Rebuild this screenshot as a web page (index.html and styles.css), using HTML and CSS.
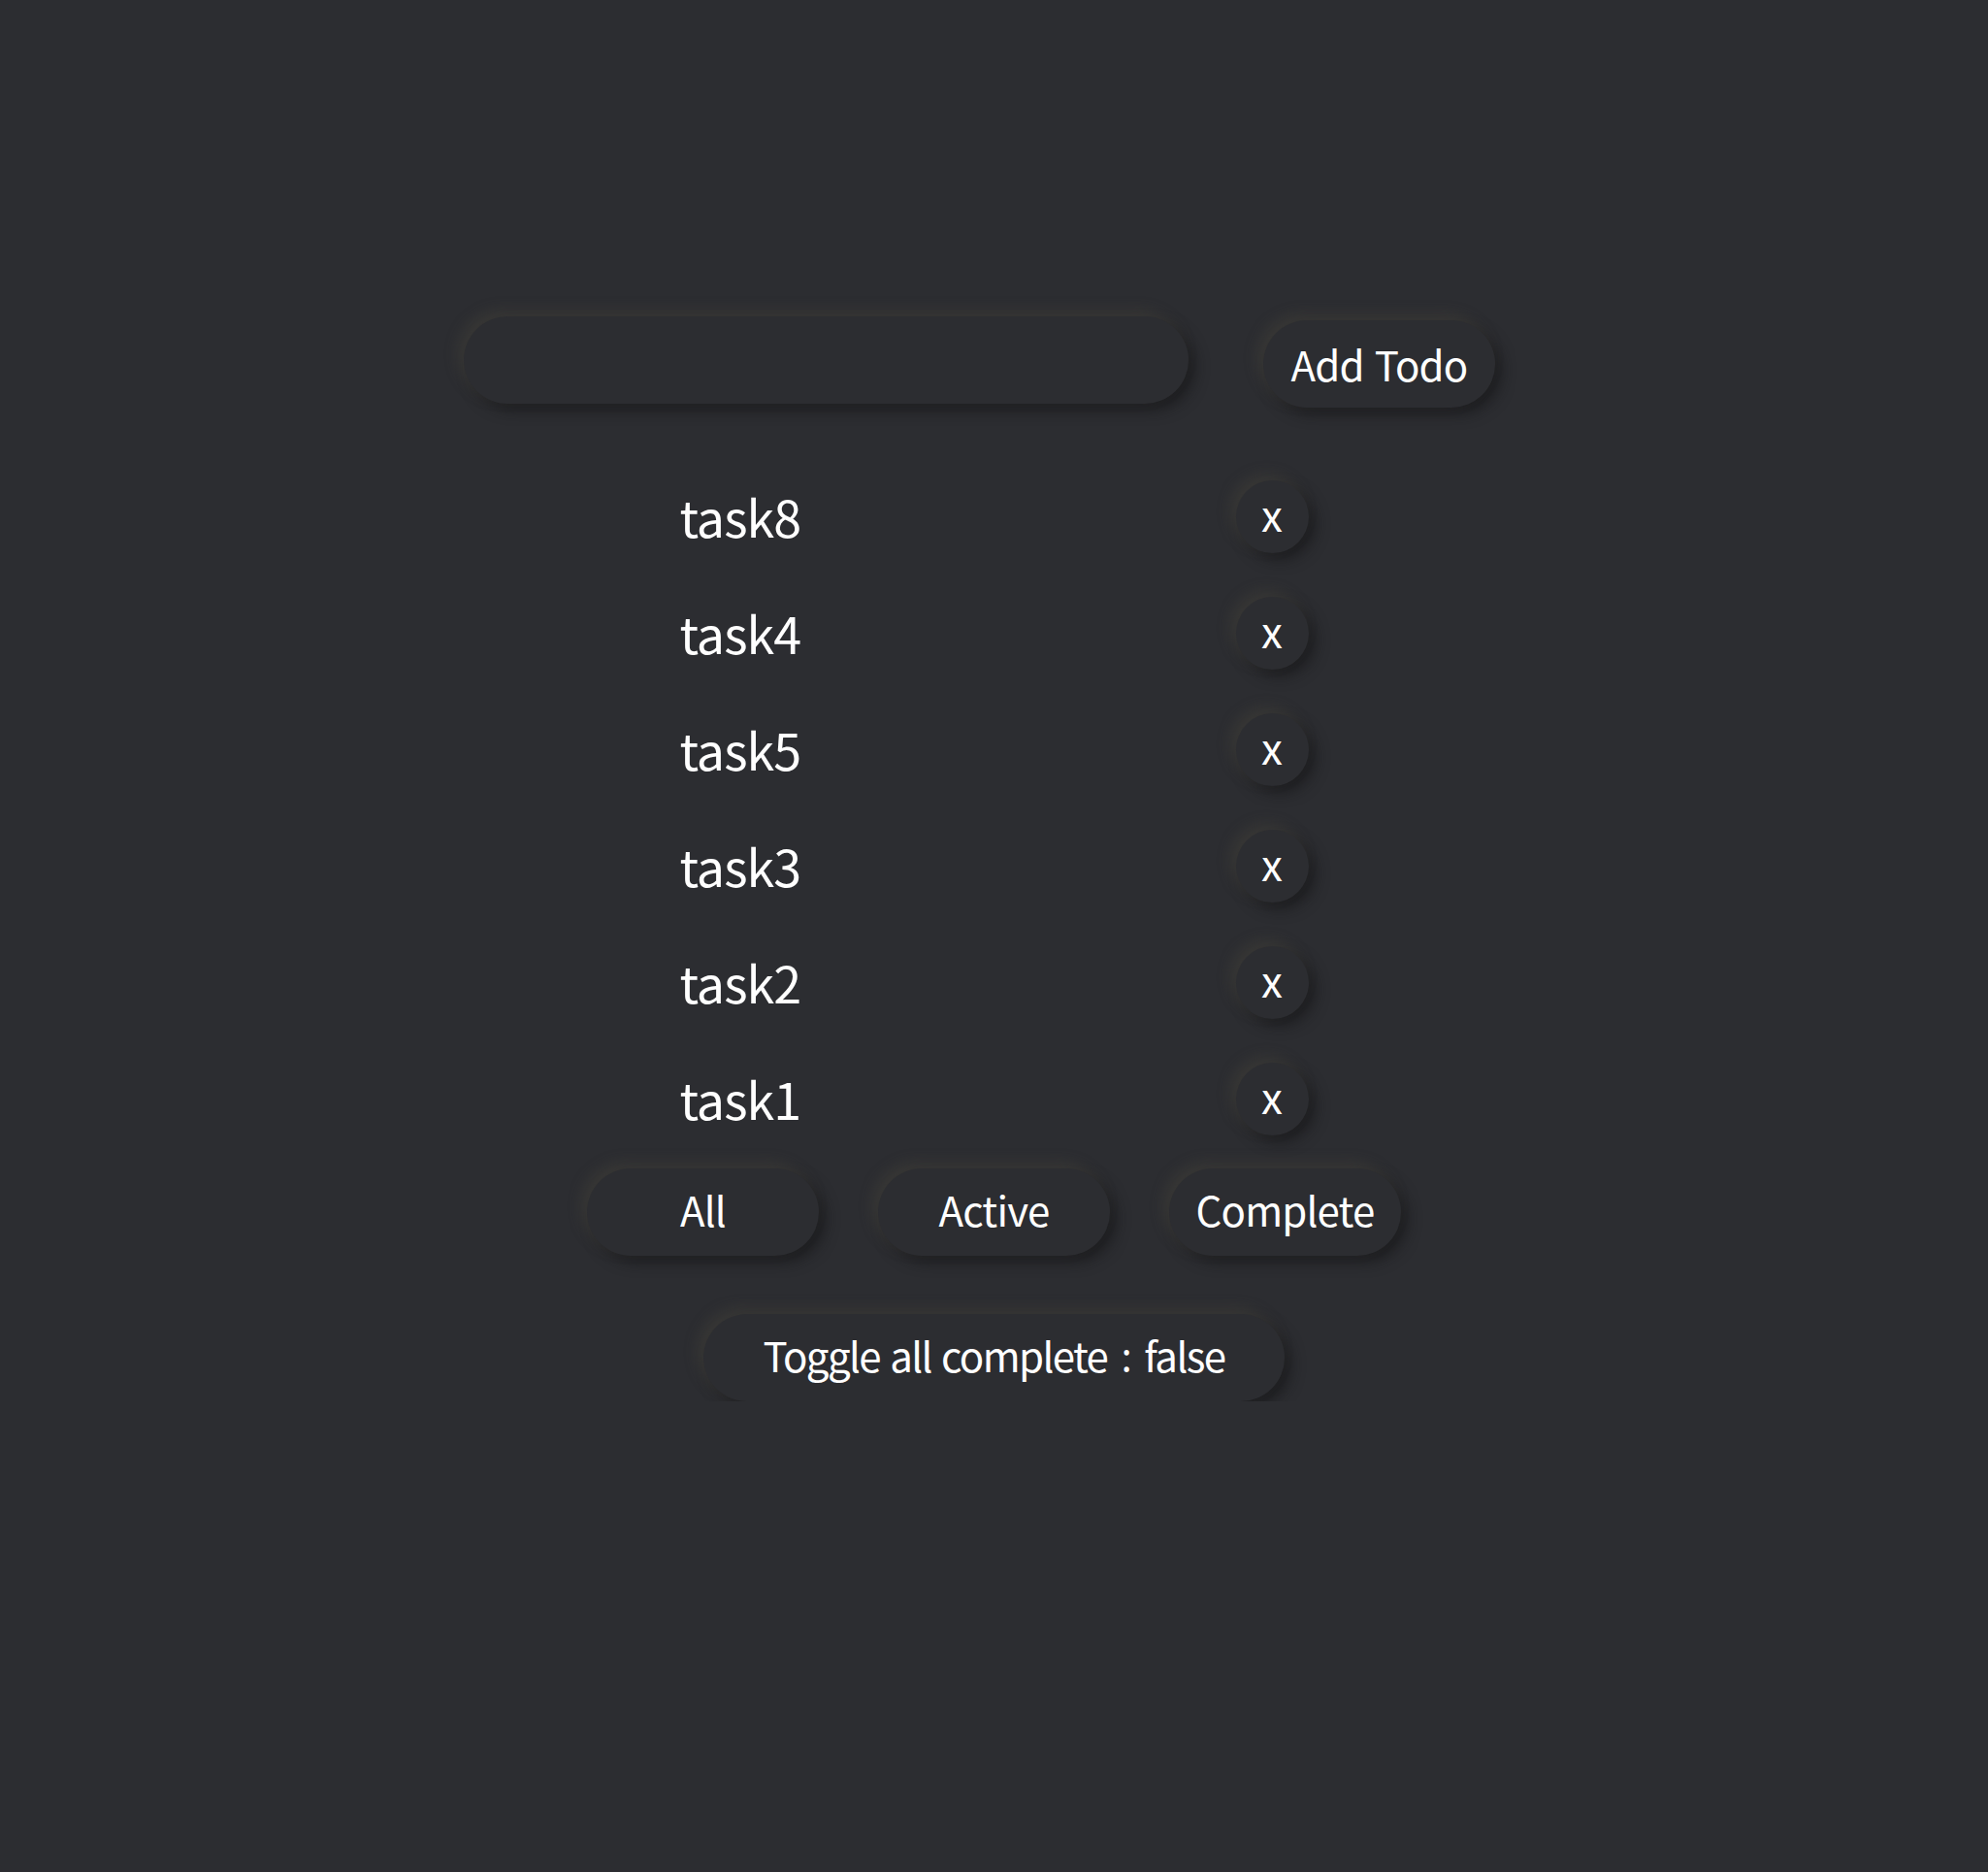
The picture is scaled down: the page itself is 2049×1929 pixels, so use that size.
FILE: index.html
```html
<!DOCTYPE html>
<html lang="ko">
<head>
<meta charset="utf-8">
<title>Todo</title>
<link rel="stylesheet" href="styles.css">
</head>
<body>
<main class="app">
  <form class="add-row">
    <input class="todo-input neu" type="text" aria-label="New todo">
    <button class="btn neu add-btn" type="button">Add Todo</button>
  </form>
  <ul class="todo-list">
    <li class="todo-item"><span class="todo-text">task8</span><button class="del neu" type="button">x</button></li>
    <li class="todo-item"><span class="todo-text">task4</span><button class="del neu" type="button">x</button></li>
    <li class="todo-item"><span class="todo-text">task5</span><button class="del neu" type="button">x</button></li>
    <li class="todo-item"><span class="todo-text">task3</span><button class="del neu" type="button">x</button></li>
    <li class="todo-item"><span class="todo-text">task2</span><button class="del neu" type="button">x</button></li>
    <li class="todo-item"><span class="todo-text">task1</span><button class="del neu" type="button">x</button></li>
  </ul>
  <div class="filters">
    <button class="btn neu filter" type="button">All</button>
    <button class="btn neu filter" type="button">Active</button>
    <button class="btn neu filter" type="button">Complete</button>
  </div>
  <div class="toggle-row">
    <button class="btn neu toggle" type="button">Toggle all complete <span class="sep">:</span> false</button>
  </div>
</main>
</body>
</html>
```
FILE: styles.css
```css
html, body {
  margin: 0;
  padding: 0;
  background: #2c2d31;
  min-height: 100%;
}
body {
  font-family: "Noto Sans CJK KR", "Noto Sans", sans-serif;
  color: #ffffff;
}
.app {
  padding-top: 326px;
  display: flex;
  flex-direction: column;
  align-items: center;
}
.neu {
  background: #2c2d31;
  border: none;
  box-shadow: -6px -6px 14px rgba(72, 68, 60, 0.45), 7px 7px 14px rgba(18, 18, 20, 0.55);
}
.add-row {
  display: flex;
  align-items: flex-start;
  gap: 77px;
  margin: 0;
  padding-right: 30px;
}
.todo-input {
  width: 747px;
  height: 90px;
  border-radius: 45px;
  box-sizing: border-box;
  outline: none;
  color: #fff;
  font: inherit;
  font-size: 40px;
  padding: 0 36px;
}
.btn {
  font-family: inherit;
  font-size: 42px;
  color: #fff;
  height: 90px;
  border-radius: 45px;
  padding: 0 0 2px;
  cursor: pointer;
  letter-spacing: -0.8px;
}
.add-btn {
  width: 239px;
  margin-top: 4px;
}
.todo-list {
  list-style: none;
  margin: 52px 0 0;
  padding: 0;
  width: 648px;
}
.todo-item {
  height: 120px;
  display: flex;
  align-items: center;
  justify-content: space-between;
}
.todo-text {
  font-size: 52px;
  letter-spacing: -1px;
  padding-bottom: 2px;
}
.del {
  width: 75px;
  height: 75px;
  border-radius: 50%;
  color: #fff;
  font-family: inherit;
  font-size: 44px;
  padding: 0 0 6px;
  line-height: 1;
}
.filters {
  display: flex;
  gap: 61px;
  margin-top: 12px;
}
.filter {
  width: 239px;
  padding-bottom: 8px;
}
.toggle-row {
  margin-top: 60px;
  display: flex;
}
.toggle {
  width: 599px;
  letter-spacing: -1.6px;
  padding-bottom: 8px;
}
.sep {
  font-family: "Noto Sans", sans-serif;
  padding: 0 4px;
}
```
